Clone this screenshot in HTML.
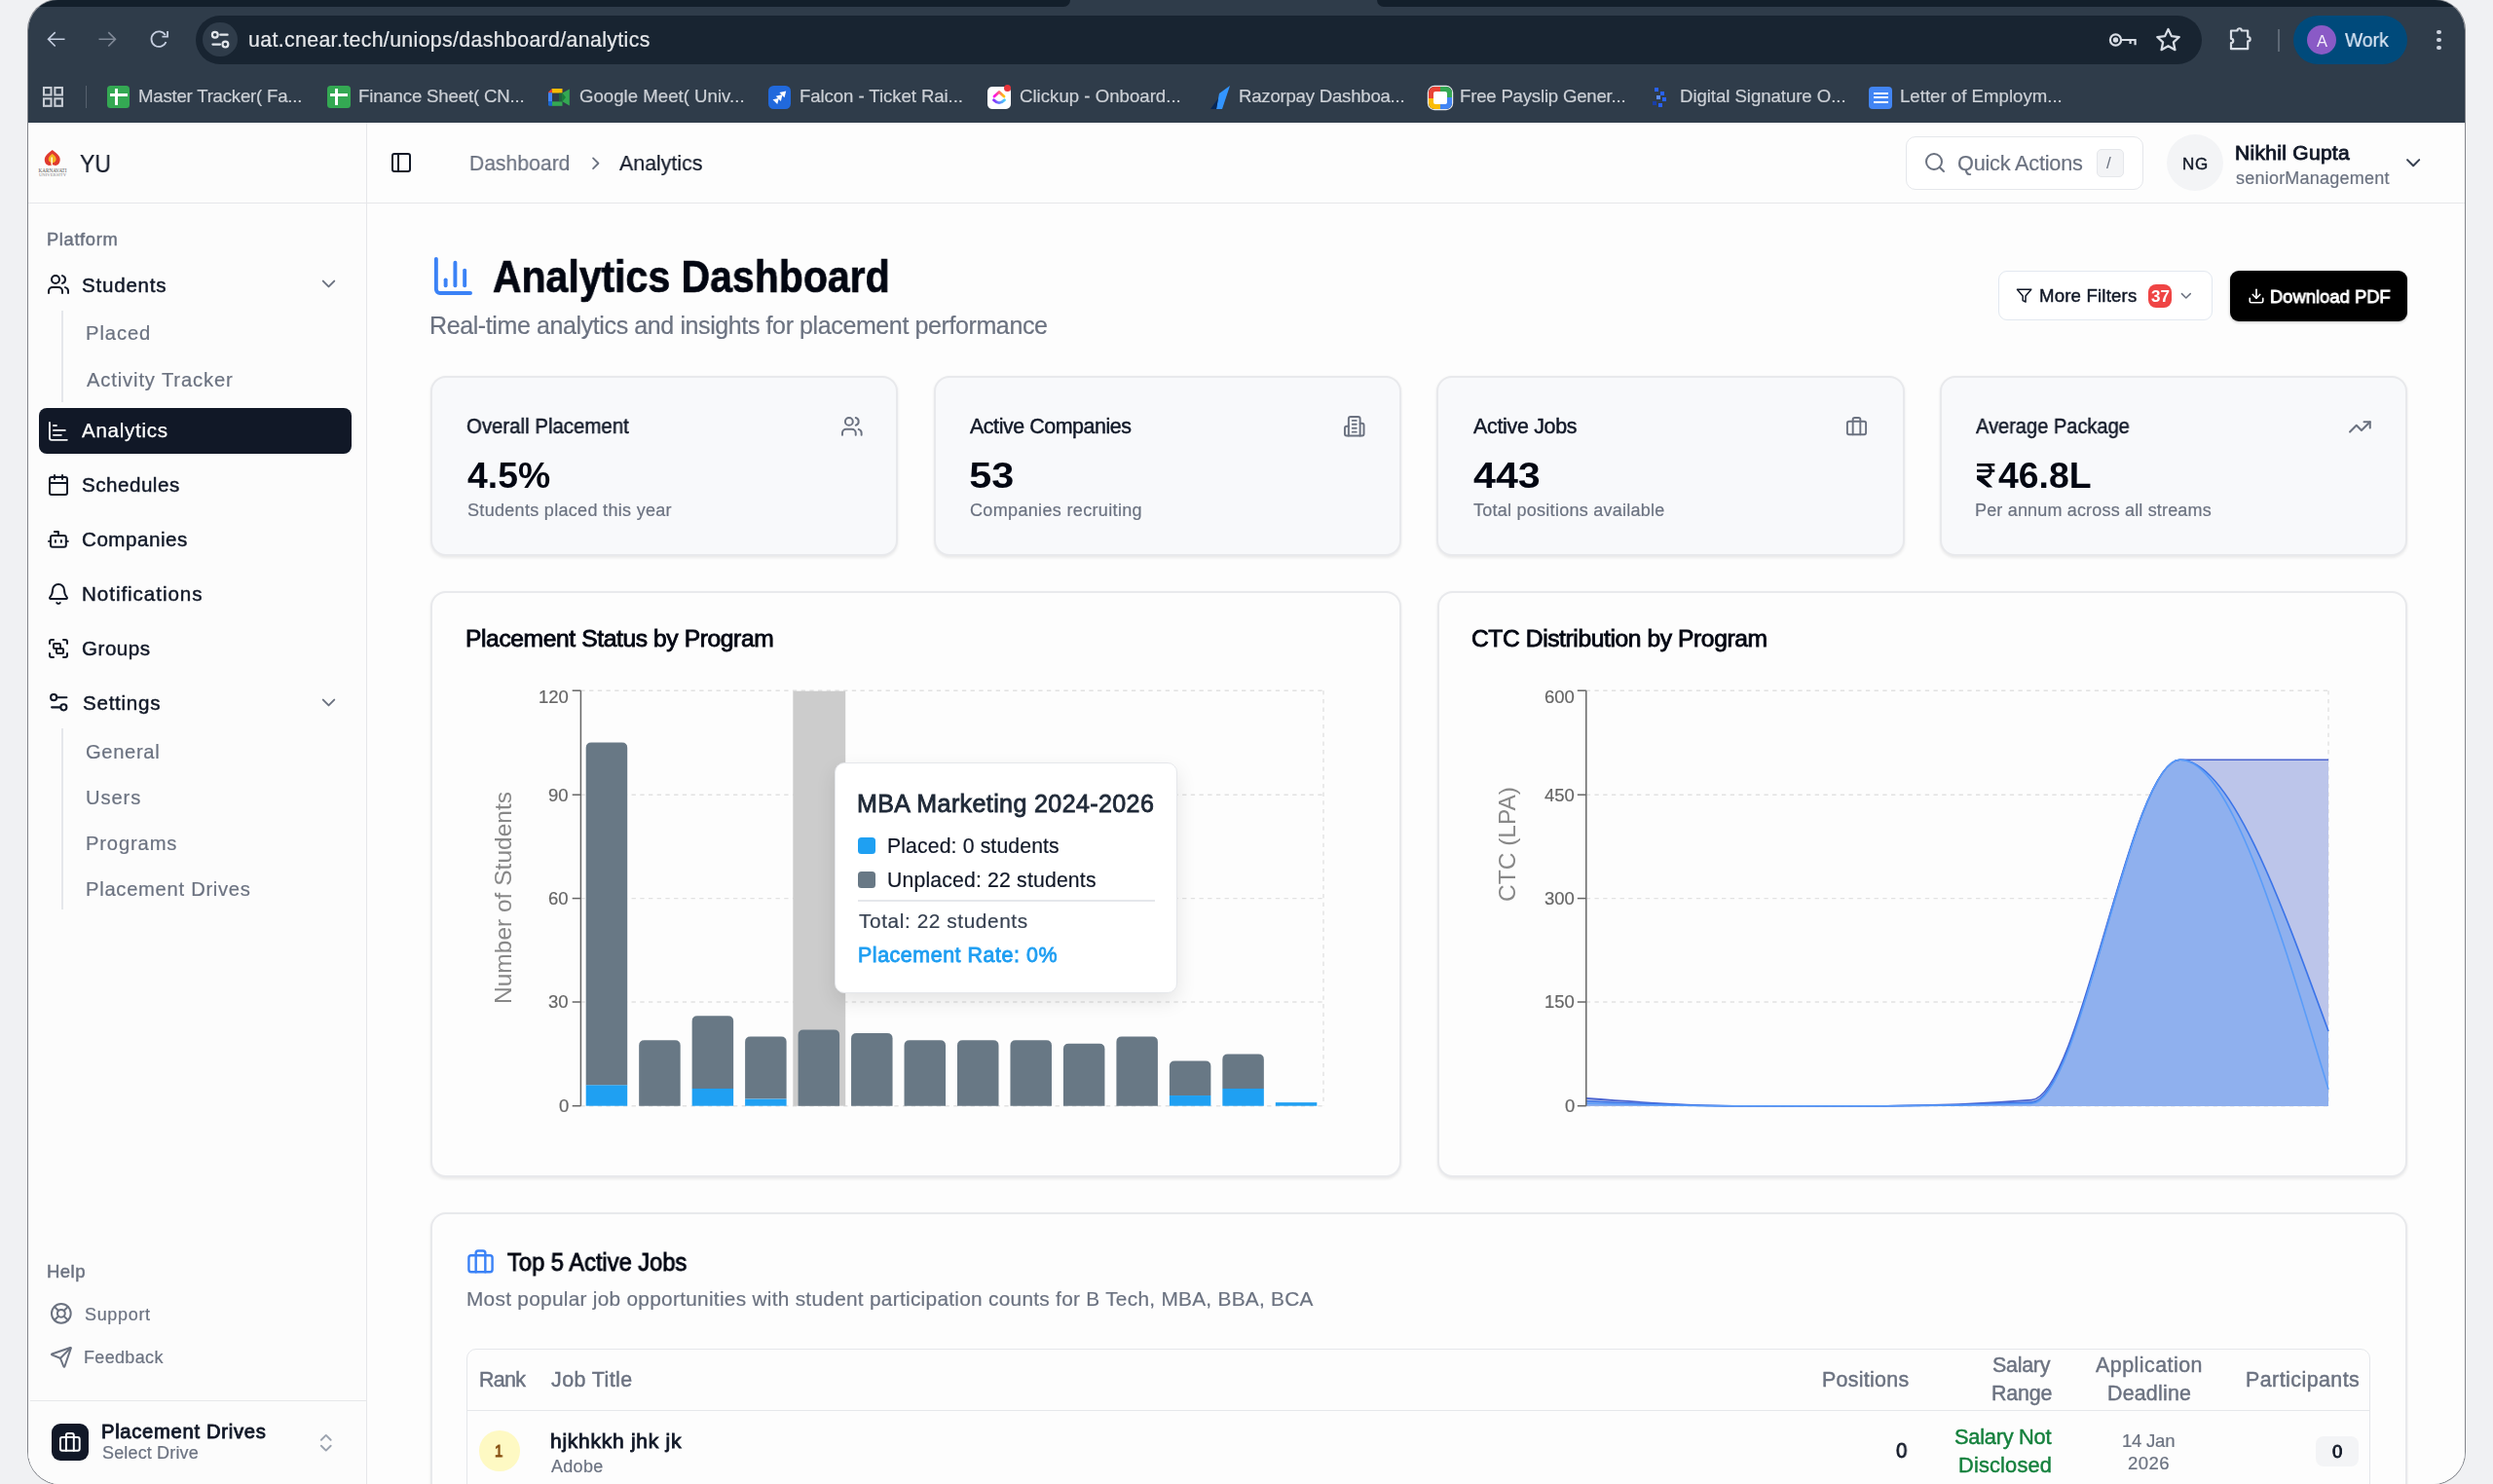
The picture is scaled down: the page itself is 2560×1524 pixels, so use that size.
<!DOCTYPE html>
<html><head><meta charset="utf-8"><title>Analytics Dashboard</title>
<style>
html,body{margin:0;padding:0;width:2560px;height:1524px;overflow:hidden;background:#f0f1f3;font-family:"Liberation Sans",sans-serif}
#win{position:absolute;left:29px;top:0;width:2502px;height:1524px;border-radius:31px 31px 33px 33px;overflow:hidden;background:#fff;box-shadow:0 0 0 1px rgba(40,44,52,.55)}
#stage{position:absolute;left:-29px;top:0;width:2560px;height:1524px}
.t{position:absolute;white-space:nowrap;will-change:transform}
</style></head><body>
<div id="win"><div id="stage">
<div style="position:absolute;left:29px;top:0px;width:2502px;height:126px;background:#2f3c4a"></div>
<div style="position:absolute;left:29px;top:0px;width:1070px;height:6.5px;background:#131f2b;border-bottom-right-radius:12px"></div>
<div style="position:absolute;left:1413.5px;top:0px;width:1117.5px;height:6.5px;background:#131f2b;border-bottom-left-radius:12px"></div>
<div style="position:absolute;left:201px;top:16px;width:2060px;height:49.5px;background:#182431;border-radius:25px"></div>
<div style="position:absolute;left:208.4px;top:23.2px;width:35.2px;height:35.2px;border-radius:50%;background:#2f3c4a"></div>
<svg style="position:absolute;left:210px;top:25px" width="32" height="32" viewBox="210 25 32 32" fill="none" stroke="#e3e7ec" stroke-width="2.2" stroke-linecap="round"><circle cx="220.8" cy="35.7" r="2.9"/><path d="M226.2 35.7H233.6"/><path d="M218.4 45.6H226"/><circle cx="231.4" cy="45.6" r="2.9"/></svg>
<svg style="position:absolute;left:43.5px;top:27.35px" width="27" height="27" viewBox="0 0 24 24" fill="#c5cee0"><path d="M20 11.1H6.6l5.2-5.2-1-1-6.9 6.9 6.9 6.9 1-1-5.2-5.2H20z"/></svg>
<svg style="position:absolute;left:96.5px;top:27.35px;transform:scaleX(-1)" width="27" height="27" viewBox="0 0 24 24" fill="#7f8896"><path d="M20 11.1H6.6l5.2-5.2-1-1-6.9 6.9 6.9 6.9 1-1-5.2-5.2H20z"/></svg>
<svg style="position:absolute;left:149.6px;top:27.4px" width="27" height="27" viewBox="0 0 24 24" fill="none" stroke="#c5cee0" stroke-width="1.6"><path d="M18.2 14.2A6.9 6.9 0 1 1 17.6 8"/><path d="M19.6 4.4V9.4H14.6" stroke-linecap="butt"/></svg>
<svg style="position:absolute;left:2163px;top:28px" width="34" height="26" viewBox="0 0 34 26" fill="none" stroke="#d8dde5" stroke-width="2.2"><circle cx="9.5" cy="13" r="5.6"/><circle cx="9.5" cy="13" r="1.6" fill="#d8dde5"/><path d="M15.1 13H29.6V18.2"/><path d="M24.6 13V17"/></svg>
<svg style="position:absolute;left:2213px;top:27.5px" width="27" height="25" viewBox="0 0 24 22" fill="none" stroke="#d8dde5" stroke-width="2" stroke-linejoin="round"><path d="M12 1.6l3 6.4 7 .8-5.2 4.8 1.4 6.9L12 17l-6.2 3.5 1.4-6.9L2 8.8l7-.8z"/></svg>
<svg style="position:absolute;left:2287px;top:25px" width="30" height="30" viewBox="0 0 30 30" fill="none" stroke="#d8dde5" stroke-width="2.2" stroke-linejoin="round"><path d="M4 6.5H10.5C10.5 3.5 14.8 3.5 14.8 6.5H21.2V13C24.5 13 24.5 17.3 21.2 17.3V25.2H4V19.2C7 19.2 7 14.8 4 14.8Z"/></svg>
<div style="position:absolute;left:2339px;top:29.5px;width:2px;height:23.1px;background:#5d6875"></div>
<div style="position:absolute;left:2355px;top:16px;width:117px;height:49.5px;background:#004a7b;border-radius:25px"></div>
<div style="position:absolute;left:2369px;top:26px;width:30px;height:30px;border-radius:50%;background:#8a5ac6"></div>
<div class="t" style="left:2378.6px;top:32.5px;font-size:16.5px;line-height:18px;color:#f2ecfa">A</div>
<div style="position:absolute;left:2502px;top:30.5px;width:4.8px;height:4.8px;border-radius:50%;background:#ccd3de"></div>
<div style="position:absolute;left:2502px;top:38.5px;width:4.8px;height:4.8px;border-radius:50%;background:#ccd3de"></div>
<div style="position:absolute;left:2502px;top:46.5px;width:4.8px;height:4.8px;border-radius:50%;background:#ccd3de"></div>
<svg style="position:absolute;left:43px;top:88.3px" width="23" height="23" viewBox="0 0 23 23" fill="none" stroke="#c8cdd5" stroke-width="2.1"><rect x="2" y="2" width="7.5" height="7.5"/><rect x="13.4" y="2" width="7.5" height="7.5"/><rect x="2" y="13.3" width="7.5" height="7.5"/><rect x="13.4" y="13.3" width="7.5" height="7.5"/></svg>
<div style="position:absolute;left:87.5px;top:88px;width:1.5px;height:23px;background:#56616e"></div>
<div style="position:absolute;left:110.2px;top:88.2px;width:23.3px;height:22.8px;border-radius:3.5px;background:#34a853"></div><div style="position:absolute;left:113.0px;top:96.2px;width:17.8px;height:2.5px;background:#fff"></div><div style="position:absolute;left:118.10000000000001px;top:91px;width:2.5px;height:17.3px;background:#fff"></div>
<div style="position:absolute;left:336.3px;top:88.2px;width:23.3px;height:22.8px;border-radius:3.5px;background:#34a853"></div><div style="position:absolute;left:339.1px;top:96.2px;width:17.8px;height:2.5px;background:#fff"></div><div style="position:absolute;left:344.2px;top:91px;width:2.5px;height:17.3px;background:#fff"></div>
<svg style="position:absolute;left:563.4px;top:90.8px" width="22" height="18" viewBox="0 0 22 18"><path d="M3.6 0H14.5V4.5H3.6Z" fill="#fbbc04"/><path d="M0 3.8L3.8 0V4.5H0Z" fill="#ea4335"/><path d="M0 4.2H4V13.5H0Z" fill="#4285f4"/><path d="M0 13.3H4V17.8H1.5Q0 17.8 0 16.3Z" fill="#1967d2"/><path d="M4 13.3H14.5V17.8H4Z" fill="#34a853"/><path d="M14.5 4.5V13.3L21.8 17.5V0.6Z" fill="#34a853"/><path d="M14.5 4.5L18 9L14.5 13.3Z" fill="#188038"/><path d="M11 4.5H14.5V13.3H11Z" fill="#188038" opacity=".6"/></svg>
<div style="position:absolute;left:788.7px;top:88.2px;width:23.6px;height:23.6px;border-radius:5.5px;background:#2169dc"></div>
<svg style="position:absolute;left:788.7px;top:88.2px" width="23.6" height="23.6" viewBox="0 0 24 24" fill="#fff"><path d="M18.5 5.5L11.5 7.2L16.8 12.5Z"/><path d="M14.8 9.2L7.8 10.9L13.1 16.2Z"/><path d="M11.1 12.9L4.6 14.6L9.4 19.4Z"/></svg>
<div style="position:absolute;left:1014.4px;top:88.5px;width:24px;height:23px;border-radius:5px;background:#fff"></div>
<svg style="position:absolute;left:1014.4px;top:88.5px" width="24" height="23" viewBox="0 0 24 23" fill="none" stroke-width="2.8" stroke-linecap="round" stroke-linejoin="round"><defs><linearGradient id="cu1" x1="0" x2="1"><stop offset="0" stop-color="#8930fd"/><stop offset="1" stop-color="#49ccf9"/></linearGradient><linearGradient id="cu2" x1="0" x2="1"><stop offset="0" stop-color="#ff02f0"/><stop offset="1" stop-color="#ffc800"/></linearGradient></defs><path d="M6.5 13.8Q12 19.5 17.5 13.8" stroke="url(#cu1)"/><path d="M7 10l5-4.5 5 4.5" stroke="url(#cu2)"/></svg>
<div style="position:absolute;left:1031px;top:86.5px;width:7px;height:7px;border-radius:50%;background:#e8333a"></div>
<svg style="position:absolute;left:1243px;top:88px" width="20" height="24" viewBox="0 0 20 24"><path d="M9 8L20 0L12 24H6Z" fill="#3395ff"/><path d="M0 24L8 13L6 24Z" fill="#072654"/></svg>
<div style="position:absolute;left:1466.9px;top:88.5px;width:24px;height:23px;border-radius:6px;background:conic-gradient(#34a853 0 25%,#4285f4 0 50%,#fbbc04 0 75%,#ea4335 0);box-shadow:0 0 0 1.2px #e8eaed"></div>
<div style="position:absolute;left:1472px;top:93.5px;width:14px;height:13px;border-radius:2px;background:#fff"></div>
<svg style="position:absolute;left:1695px;top:88px" width="20" height="24" viewBox="0 0 20 24" fill="#2962ff"><rect x="4" y="2" width="4" height="4"/><rect x="10" y="6" width="4" height="4"/><rect x="6" y="10" width="4" height="4" fill="#5c8dff"/><rect x="12" y="12" width="4" height="4"/><rect x="2" y="16" width="4" height="4" fill="#1a3fa8"/><rect x="8" y="18" width="4" height="4"/></svg>
<div style="position:absolute;left:1919.4px;top:88.5px;width:24px;height:23px;border-radius:4px;background:#4285f4"></div>
<div style="position:absolute;left:1924px;top:94.5px;width:15px;height:2.200000000000003px;background:#fff"></div>
<div style="position:absolute;left:1924px;top:99px;width:15px;height:2.200000000000003px;background:#fff"></div>
<div style="position:absolute;left:1924px;top:103.5px;width:15px;height:2.200000000000003px;background:#fff"></div>
<div style="position:absolute;left:29px;top:126px;width:2502px;height:1400px;background:#fdfdfd"></div>
<div style="position:absolute;left:29px;top:126px;width:347px;height:1400px;background:#fcfcfc"></div>
<div style="position:absolute;left:376px;top:126px;width:1px;height:1400px;background:#e6e7ea"></div>
<div style="position:absolute;left:29px;top:208px;width:2502px;height:1px;background:#e6e7ea"></div>
<svg style="position:absolute;left:38px;top:152px" width="33" height="31" viewBox="38 152 33 31"><path d="M53.7 154C50.5 156.5 48.5 158 46.8 160.5C45.2 163 45.5 167 48 169C50 170.5 52.5 170.2 53.7 168.8C55 170.2 57.5 170.5 59.5 169C62 167 62.3 163 60.7 160.5C59 158 57 156.5 53.7 154Z" fill="#e03a2f"/><path d="M53.7 157.8C51.8 159.3 50.3 160.8 49.8 162.8C49.3 165 50.8 167 53.7 167.5C56.6 167 58.1 165 57.6 162.8C57.1 160.8 55.6 159.3 53.7 157.8Z" fill="#f4b223"/><path d="M53.2 161.5V169" stroke="#fff6cf" stroke-width="1.6"/><text x="54" y="176.6" text-anchor="middle" font-family="Liberation Serif" font-size="6.2" fill="#555" textLength="29" lengthAdjust="spacingAndGlyphs">KARNAVATI</text><text x="54" y="180.6" text-anchor="middle" font-family="Liberation Serif" font-size="4.2" fill="#888" textLength="28" lengthAdjust="spacingAndGlyphs">UNIVERSITY</text></svg>
<svg style="position:absolute;left:400.30px;top:155.40px;" width="24.00" height="24.00" viewBox="0 0 24 24" fill="none" stroke="#111827" stroke-width="2" stroke-linecap="round" stroke-linejoin="round"><rect width="18" height="18" x="3" y="3" rx="2"/><path d="M9 3v18"/></svg>
<svg style="position:absolute;left:600.60px;top:157.00px;" width="21.50" height="21.50" viewBox="0 0 24 24" fill="none" stroke="#6b7280" stroke-width="2" stroke-linecap="round" stroke-linejoin="round"><path d="m9 18 6-6-6-6"/></svg>
<div style="position:absolute;left:1957px;top:140px;width:243.5px;height:54.599999999999994px;border:1.5px solid #e5e7eb;border-radius:10px;background:#fff;box-sizing:border-box"></div>
<svg style="position:absolute;left:1974.70px;top:155.00px;" width="24.00" height="24.00" viewBox="0 0 24 24" fill="none" stroke="#6b7280" stroke-width="2" stroke-linecap="round" stroke-linejoin="round"><circle cx="11" cy="11" r="8"/><path d="m21 21-4.3-4.3"/></svg>
<div style="position:absolute;left:2153px;top:153px;width:28px;height:28.69999999999999px;border:1.2px solid #e5e7eb;border-radius:5px;background:#f3f4f6;box-sizing:border-box"></div>
<div class="t" style="left:2162.5px;top:158px;font-size:17px;line-height:20px;color:#6b7280">/</div>
<div style="position:absolute;left:2225px;top:138px;width:58px;height:58px;border-radius:50%;background:#f3f4f6"></div>
<svg style="position:absolute;left:2465.75px;top:154.65px;" width="24.30" height="24.30" viewBox="0 0 24 24" fill="none" stroke="#374151" stroke-width="2" stroke-linecap="round" stroke-linejoin="round"><path d="m6 9 6 6 6-6"/></svg>
<div style="position:absolute;left:39.5px;top:418.8px;width:321.5px;height:47.0px;background:#111827;border-radius:8px"></div>
<div style="position:absolute;left:63.2px;top:318.6px;width:1.5px;height:94.0px;background:#e5e7eb"></div>
<div style="position:absolute;left:63.2px;top:747.8px;width:1.5px;height:186.70000000000005px;background:#e5e7eb"></div>
<svg style="position:absolute;left:47.85px;top:280.35px;" width="24.00" height="24.00" viewBox="0 0 24 24" fill="none" stroke="#111827" stroke-width="2" stroke-linecap="round" stroke-linejoin="round"><path d="M16 21v-2a4 4 0 0 0-4-4H6a4 4 0 0 0-4 4v2"/><path d="M16 3.13a4 4 0 0 1 0 7.75"/><path d="M22 21v-2a4 4 0 0 0-3-3.87"/><circle cx="9" cy="7" r="4"/></svg>
<svg style="position:absolute;left:326.30px;top:280.40px;" width="23.00" height="23.00" viewBox="0 0 24 24" fill="none" stroke="#6b7280" stroke-width="2" stroke-linecap="round" stroke-linejoin="round"><path d="m6 9 6 6 6-6"/></svg>
<svg style="position:absolute;left:47.90px;top:431.20px;" width="23.80" height="23.80" viewBox="0 0 24 24" fill="none" stroke="#f3f4f6" stroke-width="1.9" stroke-linecap="round" stroke-linejoin="round"><path d="M3 3v16a2 2 0 0 0 2 2h16"/><path d="M7 16h8"/><path d="M7 11h12"/><path d="M7 6h3"/></svg>
<svg style="position:absolute;left:48.00px;top:485.70px;" width="24.00" height="24.00" viewBox="0 0 24 24" fill="none" stroke="#111827" stroke-width="2" stroke-linecap="round" stroke-linejoin="round"><path d="M8 2v4"/><path d="M16 2v4"/><rect width="18" height="18" x="3" y="4" rx="2"/><path d="M3 10h18"/></svg>
<svg style="position:absolute;left:48.10px;top:542.00px;" width="23.80" height="23.80" viewBox="0 0 24 24" fill="none" stroke="#111827" stroke-width="2" stroke-linecap="round" stroke-linejoin="round"><path d="M12 8V4H8"/><rect width="16" height="12" x="4" y="8" rx="2"/><path d="M2 14h2"/><path d="M20 14h2"/><path d="M15 13v2"/><path d="M9 13v2"/></svg>
<svg style="position:absolute;left:48.00px;top:598.40px;" width="24.00" height="24.00" viewBox="0 0 24 24" fill="none" stroke="#111827" stroke-width="2" stroke-linecap="round" stroke-linejoin="round"><path d="M10.268 21a2 2 0 0 0 3.464 0"/><path d="M3.262 15.326A1 1 0 0 0 4 17h16a1 1 0 0 0 .74-1.673C19.41 13.956 18 12.499 18 8A6 6 0 0 0 6 8c0 4.499-1.411 5.956-2.738 7.326"/></svg>
<svg style="position:absolute;left:48.20px;top:653.70px;" width="24.00" height="24.00" viewBox="0 0 24 24" fill="none" stroke="#111827" stroke-width="2" stroke-linecap="round" stroke-linejoin="round"><path d="M3 7V5c0-1.1.9-2 2-2h2"/><path d="M17 3h2c1.1 0 2 .9 2 2v2"/><path d="M21 17v2c0 1.1-.9 2-2 2h-2"/><path d="M7 21H5c-1.1 0-2-.9-2-2v-2"/><rect width="7" height="5" x="7" y="7" rx="1"/><rect width="7" height="5" x="10" y="12" rx="1"/></svg>
<svg style="position:absolute;left:48.00px;top:709.40px;" width="24.50" height="24.50" viewBox="0 0 24 24" fill="none" stroke="#111827" stroke-width="2" stroke-linecap="round" stroke-linejoin="round"><path d="M20 7h-9"/><path d="M14 17H5"/><circle cx="17" cy="17" r="3"/><circle cx="7" cy="7" r="3"/></svg>
<svg style="position:absolute;left:326.40px;top:710.00px;" width="23.00" height="23.00" viewBox="0 0 24 24" fill="none" stroke="#6b7280" stroke-width="2" stroke-linecap="round" stroke-linejoin="round"><path d="m6 9 6 6 6-6"/></svg>
<svg style="position:absolute;left:51.30px;top:1337.30px;" width="23.70" height="23.70" viewBox="0 0 24 24" fill="none" stroke="#6b7280" stroke-width="2" stroke-linecap="round" stroke-linejoin="round"><circle cx="12" cy="12" r="10"/><path d="m4.93 4.93 4.24 4.24"/><path d="m14.83 9.17 4.24-4.24"/><path d="m14.83 14.83 4.24 4.24"/><path d="m9.17 14.83-4.24 4.24"/><circle cx="12" cy="12" r="4"/></svg>
<svg style="position:absolute;left:51.10px;top:1381.50px;" width="23.80" height="23.80" viewBox="0 0 24 24" fill="none" stroke="#6b7280" stroke-width="2" stroke-linecap="round" stroke-linejoin="round"><path d="M14.536 21.686a.5.5 0 0 0 .937-.024l6.5-19a.496.496 0 0 0-.635-.635l-19 6.5a.5.5 0 0 0-.024.937l7.93 3.18a2 2 0 0 1 1.112 1.11z"/><path d="m21.854 2.147-10.94 10.939"/></svg>
<div style="position:absolute;left:31px;top:1437.5px;width:345px;height:1.0px;background:#e6e7ea"></div>
<div style="position:absolute;left:52.7px;top:1462px;width:38.099999999999994px;height:38px;background:#111827;border-radius:9px"></div>
<svg style="position:absolute;left:59.90px;top:1469.65px;" width="23.70" height="23.70" viewBox="0 0 24 24" fill="none" stroke="#ffffff" stroke-width="2" stroke-linecap="round" stroke-linejoin="round"><path d="M16 20V4a2 2 0 0 0-2-2h-4a2 2 0 0 0-2 2v16"/><rect width="20" height="14" x="2" y="6" rx="2"/></svg>
<svg style="position:absolute;left:323.00px;top:1469.70px;" width="23.50" height="23.50" viewBox="0 0 24 24" fill="none" stroke="#9ca3af" stroke-width="2" stroke-linecap="round" stroke-linejoin="round"><path d="m7 15 5 5 5-5"/><path d="m7 9 5-5 5 5"/></svg>
<svg style="position:absolute;left:442.00px;top:259.90px;" width="46.90" height="46.90" viewBox="0 0 24 24" fill="none" stroke="#3b82f6" stroke-width="2" stroke-linecap="round" stroke-linejoin="round"><path d="M3 3v16a2 2 0 0 0 2 2h16"/><path d="M18 17V9"/><path d="M13 17V5"/><path d="M8 17v-3"/></svg>
<div style="position:absolute;left:2052px;top:278px;width:219.69999999999982px;height:51px;border:1.5px solid #e2e8f0;border-radius:9px;background:#fff;box-sizing:border-box"></div>
<svg style="position:absolute;left:2070.20px;top:295.05px;" width="17.20" height="17.20" viewBox="0 0 24 24" fill="none" stroke="#111827" stroke-width="2.1" stroke-linecap="round" stroke-linejoin="round"><polygon points="22 3 2 3 10 12.46 10 19 14 21 14 12.46 22 3"/></svg>
<div style="position:absolute;left:2206.3px;top:292px;width:23.59999999999991px;height:23.600000000000023px;background:#ef4444;border-radius:8px"></div>
<svg style="position:absolute;left:2235.60px;top:294.85px;" width="17.70" height="17.70" viewBox="0 0 24 24" fill="none" stroke="#6b7280" stroke-width="2" stroke-linecap="round" stroke-linejoin="round"><path d="m6 9 6 6 6-6"/></svg>
<div style="position:absolute;left:2290px;top:278px;width:182px;height:52px;background:#000;border-radius:9px;box-shadow:0 1px 3px rgba(0,0,0,.25)"></div>
<svg style="position:absolute;left:2307.50px;top:295.05px;" width="18.00" height="18.00" viewBox="0 0 24 24" fill="none" stroke="#ffffff" stroke-width="2.2" stroke-linecap="round" stroke-linejoin="round"><path d="M21 15v4a2 2 0 0 1-2 2H5a2 2 0 0 1-2-2v-4"/><polyline points="7 10 12 15 17 10"/><line x1="12" x2="12" y1="15" y2="3"/></svg>
<div style="position:absolute;left:441.8px;top:386px;width:480.59999999999997px;height:184.5px;background:#f8f9fb;border:2px solid #e8e9ec;border-radius:16px;box-sizing:border-box;box-shadow:0 1.5px 3px rgba(0,0,0,.08)"></div>
<div style="position:absolute;left:958.6px;top:386px;width:480.6px;height:184.5px;background:#f8f9fb;border:2px solid #e8e9ec;border-radius:16px;box-sizing:border-box;box-shadow:0 1.5px 3px rgba(0,0,0,.08)"></div>
<div style="position:absolute;left:1475.4px;top:386px;width:480.39999999999986px;height:184.5px;background:#f8f9fb;border:2px solid #e8e9ec;border-radius:16px;box-sizing:border-box;box-shadow:0 1.5px 3px rgba(0,0,0,.08)"></div>
<div style="position:absolute;left:1991.8px;top:386px;width:480.60000000000014px;height:184.5px;background:#f8f9fb;border:2px solid #e8e9ec;border-radius:16px;box-sizing:border-box;box-shadow:0 1.5px 3px rgba(0,0,0,.08)"></div>
<svg style="position:absolute;left:2029.8px;top:476px" width="19" height="25" viewBox="0 0 19 25" fill="#030712"><rect x="0" y="0" width="18.3" height="2.5"/><rect x="0" y="6.2" width="18.3" height="2.6"/><path d="M0 1.25H8.6C13 1.25 14.3 4.2 14.3 7.6C14.3 11.4 11.8 13.9 7.8 13.9H0" fill="none" stroke="#030712" stroke-width="2.7"/><path d="M0 12.6H4.6L16.2 24.4H10.9L0 16.4Z"/></svg>
<svg style="position:absolute;left:862.60px;top:425.90px;" width="23.60" height="23.60" viewBox="0 0 24 24" fill="none" stroke="#6b7280" stroke-width="2" stroke-linecap="round" stroke-linejoin="round"><path d="M16 21v-2a4 4 0 0 0-4-4H6a4 4 0 0 0-4 4v2"/><path d="M16 3.13a4 4 0 0 1 0 7.75"/><path d="M22 21v-2a4 4 0 0 0-3-3.87"/><circle cx="9" cy="7" r="4"/></svg>
<svg style="position:absolute;left:1379.40px;top:426.00px;" width="23.50" height="23.50" viewBox="0 0 24 24" fill="none" stroke="#6b7280" stroke-width="2" stroke-linecap="round" stroke-linejoin="round"><path d="M6 22V4a2 2 0 0 1 2-2h8a2 2 0 0 1 2 2v18Z"/><path d="M6 12H4a2 2 0 0 0-2 2v6a2 2 0 0 0 2 2h2"/><path d="M18 9h2a2 2 0 0 1 2 2v9a2 2 0 0 1-2 2h-2"/><path d="M10 6h4"/><path d="M10 10h4"/><path d="M10 14h4"/><path d="M10 18h4"/></svg>
<svg style="position:absolute;left:1895.35px;top:427.40px;" width="23.00" height="23.00" viewBox="0 0 24 24" fill="none" stroke="#6b7280" stroke-width="2" stroke-linecap="round" stroke-linejoin="round"><path d="M16 20V4a2 2 0 0 0-2-2h-4a2 2 0 0 0-2 2v16"/><rect width="20" height="14" x="2" y="6" rx="2"/></svg>
<svg style="position:absolute;left:2411.45px;top:425.80px;" width="24.80" height="24.80" viewBox="0 0 24 24" fill="none" stroke="#6b7280" stroke-width="2" stroke-linecap="round" stroke-linejoin="round"><polyline points="22 7 13.5 15.5 8.5 10.5 2 17"/><polyline points="16 7 22 7 22 13"/></svg>
<div style="position:absolute;left:441.6px;top:606.8px;width:997.1999999999999px;height:602.7px;background:#fdfdfd;border:2px solid #e8e9ec;border-radius:16px;box-sizing:border-box;box-shadow:0 1.5px 3px rgba(0,0,0,.08)"></div>
<div style="position:absolute;left:1475.6px;top:606.8px;width:996.8000000000002px;height:602.7px;background:#fdfdfd;border:2px solid #e8e9ec;border-radius:16px;box-sizing:border-box;box-shadow:0 1.5px 3px rgba(0,0,0,.08)"></div>
<svg style="position:absolute;left:0;top:0" width="2560" height="1524" viewBox="0 0 2560 1524"><line x1="596.4" y1="709.2" x2="1359" y2="709.2" stroke="#e2e2e2" stroke-width="1.4" stroke-dasharray="4.3 4.4"/><line x1="596.4" y1="816.2" x2="1359" y2="816.2" stroke="#e2e2e2" stroke-width="1.4" stroke-dasharray="4.3 4.4"/><line x1="596.4" y1="922.6" x2="1359" y2="922.6" stroke="#e2e2e2" stroke-width="1.4" stroke-dasharray="4.3 4.4"/><line x1="596.4" y1="1029" x2="1359" y2="1029" stroke="#e2e2e2" stroke-width="1.4" stroke-dasharray="4.3 4.4"/><line x1="596.4" y1="1135.7" x2="1359" y2="1135.7" stroke="#e2e2e2" stroke-width="1.4" stroke-dasharray="4.3 4.4"/><line x1="1359" y1="709.2" x2="1359" y2="1135.7" stroke="#e2e2e2" stroke-width="1.4" stroke-dasharray="4.3 4.4"/><rect x="814.3" y="709.7" width="53.9" height="426" fill="#cccccc"/><path d="M601.70 1114.38V768.03Q601.70 762.53 607.20 762.53H638.70Q644.20 762.53 644.20 768.03V1114.38Z" fill="#687885"/><rect x="601.70" y="1114.38" width="42.5" height="21.32" fill="#1fa0f2"/><path d="M656.17 1135.70V1073.67Q656.17 1068.17 661.67 1068.17H693.17Q698.67 1068.17 698.67 1073.67V1135.70Z" fill="#687885"/><path d="M710.64 1117.93V1048.80Q710.64 1043.30 716.14 1043.30H747.64Q753.14 1043.30 753.14 1048.80V1117.93Z" fill="#687885"/><rect x="710.64" y="1117.93" width="42.5" height="17.77" fill="#1fa0f2"/><path d="M765.11 1128.59V1070.12Q765.11 1064.62 770.61 1064.62H802.11Q807.61 1064.62 807.61 1070.12V1128.59Z" fill="#687885"/><rect x="765.11" y="1128.59" width="42.5" height="7.11" fill="#1fa0f2"/><path d="M819.58 1135.70V1063.01Q819.58 1057.51 825.08 1057.51H856.58Q862.08 1057.51 862.08 1063.01V1135.70Z" fill="#687885"/><path d="M874.05 1135.70V1066.57Q874.05 1061.07 879.55 1061.07H911.05Q916.55 1061.07 916.55 1066.57V1135.70Z" fill="#687885"/><path d="M928.52 1135.70V1073.67Q928.52 1068.17 934.02 1068.17H965.52Q971.02 1068.17 971.02 1073.67V1135.70Z" fill="#687885"/><path d="M982.99 1135.70V1073.67Q982.99 1068.17 988.49 1068.17H1019.99Q1025.49 1068.17 1025.49 1073.67V1135.70Z" fill="#687885"/><path d="M1037.46 1135.70V1073.67Q1037.46 1068.17 1042.96 1068.17H1074.46Q1079.96 1068.17 1079.96 1073.67V1135.70Z" fill="#687885"/><path d="M1091.93 1135.70V1077.23Q1091.93 1071.73 1097.43 1071.73H1128.93Q1134.43 1071.73 1134.43 1077.23V1135.70Z" fill="#687885"/><path d="M1146.40 1135.70V1070.12Q1146.40 1064.62 1151.90 1064.62H1183.40Q1188.90 1064.62 1188.90 1070.12V1135.70Z" fill="#687885"/><path d="M1200.87 1125.04V1095.00Q1200.87 1089.50 1206.37 1089.50H1237.87Q1243.37 1089.50 1243.37 1095.00V1125.04Z" fill="#687885"/><rect x="1200.87" y="1125.04" width="42.5" height="10.66" fill="#1fa0f2"/><path d="M1255.34 1117.93V1087.89Q1255.34 1082.39 1260.84 1082.39H1292.34Q1297.84 1082.39 1297.84 1087.89V1117.93Z" fill="#687885"/><rect x="1255.34" y="1117.93" width="42.5" height="17.77" fill="#1fa0f2"/><rect x="1309.81" y="1132.15" width="42.5" height="3.55" fill="#1fa0f2"/><line x1="596.4" y1="709.2" x2="596.4" y2="1135.7" stroke="#666" stroke-width="1.5"/><line x1="587.7" y1="709.2" x2="596.4" y2="709.2" stroke="#666" stroke-width="1.5"/><line x1="587.7" y1="816.2" x2="596.4" y2="816.2" stroke="#666" stroke-width="1.5"/><line x1="587.7" y1="922.6" x2="596.4" y2="922.6" stroke="#666" stroke-width="1.5"/><line x1="587.7" y1="1029" x2="596.4" y2="1029" stroke="#666" stroke-width="1.5"/><line x1="587.7" y1="1135.7" x2="596.4" y2="1135.7" stroke="#666" stroke-width="1.5"/><line x1="1628.8" y1="709.2" x2="2391" y2="709.2" stroke="#e2e2e2" stroke-width="1.4" stroke-dasharray="4.3 4.4"/><line x1="1628.8" y1="816.2" x2="2391" y2="816.2" stroke="#e2e2e2" stroke-width="1.4" stroke-dasharray="4.3 4.4"/><line x1="1628.8" y1="922.6" x2="2391" y2="922.6" stroke="#e2e2e2" stroke-width="1.4" stroke-dasharray="4.3 4.4"/><line x1="1628.8" y1="1029" x2="2391" y2="1029" stroke="#e2e2e2" stroke-width="1.4" stroke-dasharray="4.3 4.4"/><line x1="1628.8" y1="1135.7" x2="2391" y2="1135.7" stroke="#e2e2e2" stroke-width="1.4" stroke-dasharray="4.3 4.4"/><line x1="2391" y1="709.2" x2="2391" y2="1135.7" stroke="#e2e2e2" stroke-width="1.4" stroke-dasharray="4.3 4.4"/><path d="M1628.80,1127.88C1679.61,1131.79 1730.43,1135.70 1781.24,1135.70C1832.05,1135.70 1882.87,1135.70 1933.68,1135.70C1984.49,1135.70 2035.31,1133.69 2086.12,1129.66C2136.93,1125.63 2187.75,780.28 2238.56,780.28C2289.37,780.28 2340.19,780.28 2391.00,780.28L2391.00,1135.7L1628.80,1135.7Z" fill="#bcc5ea" stroke="none"/><path d="M1628.80,1130.72C1679.61,1133.21 1730.43,1135.70 1781.24,1135.70C1832.05,1135.70 1882.87,1135.70 1933.68,1135.70C1984.49,1135.70 2035.31,1134.52 2086.12,1132.15C2136.93,1129.78 2187.75,780.28 2238.56,780.28C2289.37,780.28 2340.19,919.61 2391.00,1058.93L2391.00,1135.7L1628.80,1135.7Z" fill="#8fb0ee" stroke="none"/><path d="M1628.80,1133.21C1679.61,1134.46 1730.43,1135.70 1781.24,1135.70C1832.05,1135.70 1882.87,1135.70 1933.68,1135.70C1984.49,1135.70 2035.31,1134.99 2086.12,1133.57C2136.93,1132.15 2187.75,780.28 2238.56,780.28C2289.37,780.28 2340.19,949.46 2391.00,1118.64L2391.00,1135.7L1628.80,1135.7Z" fill="#8fb0ee" stroke="none"/><path d="M1628.80,1127.88C1679.61,1131.79 1730.43,1135.70 1781.24,1135.70C1832.05,1135.70 1882.87,1135.70 1933.68,1135.70C1984.49,1135.70 2035.31,1133.69 2086.12,1129.66C2136.93,1125.63 2187.75,780.28 2238.56,780.28C2289.37,780.28 2340.19,780.28 2391.00,780.28" fill="none" stroke="#4a63d0" stroke-width="1.6"/><path d="M1628.80,1130.72C1679.61,1133.21 1730.43,1135.70 1781.24,1135.70C1832.05,1135.70 1882.87,1135.70 1933.68,1135.70C1984.49,1135.70 2035.31,1134.52 2086.12,1132.15C2136.93,1129.78 2187.75,780.28 2238.56,780.28C2289.37,780.28 2340.19,919.61 2391.00,1058.93" fill="none" stroke="#3b74e8" stroke-width="1.6"/><path d="M1628.80,1133.21C1679.61,1134.46 1730.43,1135.70 1781.24,1135.70C1832.05,1135.70 1882.87,1135.70 1933.68,1135.70C1984.49,1135.70 2035.31,1134.99 2086.12,1133.57C2136.93,1132.15 2187.75,780.28 2238.56,780.28C2289.37,780.28 2340.19,949.46 2391.00,1118.64" fill="none" stroke="#5a9cf8" stroke-width="1.6"/><line x1="1628.8" y1="709.2" x2="1628.8" y2="1135.7" stroke="#666" stroke-width="1.5"/><line x1="1619.8" y1="709.2" x2="1628.8" y2="709.2" stroke="#666" stroke-width="1.5"/><line x1="1619.8" y1="816.2" x2="1628.8" y2="816.2" stroke="#666" stroke-width="1.5"/><line x1="1619.8" y1="922.6" x2="1628.8" y2="922.6" stroke="#666" stroke-width="1.5"/><line x1="1619.8" y1="1029" x2="1628.8" y2="1029" stroke="#666" stroke-width="1.5"/><line x1="1619.8" y1="1135.7" x2="1628.8" y2="1135.7" stroke="#666" stroke-width="1.5"/><text transform="translate(524.5 922) rotate(-90)" text-anchor="middle" font-family="Liberation Sans" font-size="24.5" fill="#888">Number of Students</text><text transform="translate(1556 867) rotate(-90)" text-anchor="middle" font-family="Liberation Sans" font-size="24.5" fill="#888">CTC (LPA)</text></svg>
<div style="position:absolute;left:856.5px;top:782.7px;width:352.70000000000005px;height:237.19999999999993px;background:#fff;border:1px solid #e5e7eb;border-radius:10px;box-sizing:border-box;box-shadow:0 8px 20px rgba(0,0,0,.10)"></div>
<div style="position:absolute;left:881px;top:859.7px;width:17.600000000000023px;height:17.5px;background:#1fa0f2;border-radius:3.5px"></div>
<div style="position:absolute;left:881px;top:895.3px;width:17.600000000000023px;height:17.200000000000045px;background:#687885;border-radius:3.5px"></div>
<div style="position:absolute;left:881px;top:924.2px;width:304.5999999999999px;height:1.3999999999999773px;background:#e5e7eb"></div>
<div style="position:absolute;left:441.6px;top:1244.6px;width:2030.9px;height:355.4000000000001px;background:#fdfdfd;border:2px solid #e8e9ec;border-radius:16px;box-sizing:border-box;box-shadow:0 1.5px 3px rgba(0,0,0,.08)"></div>
<svg style="position:absolute;left:479.10px;top:1281.70px;" width="29.00" height="29.00" viewBox="0 0 24 24" fill="none" stroke="#3b82f6" stroke-width="2" stroke-linecap="round" stroke-linejoin="round"><path d="M16 20V4a2 2 0 0 0-2-2h-4a2 2 0 0 0-2 2v16"/><rect width="20" height="14" x="2" y="6" rx="2"/></svg>
<div style="position:absolute;left:479.2px;top:1385px;width:1954.9999999999998px;height:215px;border:1.5px solid #e5e7eb;border-radius:10px;box-sizing:border-box"></div>
<div style="position:absolute;left:479.2px;top:1447.7px;width:1954.9999999999998px;height:1.5px;background:#e5e7eb"></div>
<div style="position:absolute;left:492px;top:1469.3px;width:41.5px;height:41.5px;border-radius:50%;background:#fef9c3"></div>
<div style="position:absolute;left:2378.3px;top:1474.5px;width:43.59999999999991px;height:31.09999999999991px;background:#f3f4f6;border-radius:8px"></div>
<div class="t" style="left:255.30px;top:30.87px;font-size:21.3px;line-height:21.3px;color:#e6e8eb;-webkit-text-stroke:0.2px #e6e8eb;letter-spacing:0.363px">uat.cnear.tech/uniops/dashboard/analytics</div>
<div class="t" style="left:142.10px;top:90.36px;font-size:18.6px;line-height:18.6px;color:#ccd0d6;-webkit-text-stroke:0.2px #ccd0d6;letter-spacing:-0.210px">Master Tracker( Fa...</div>
<div class="t" style="left:368.00px;top:90.36px;font-size:18.6px;line-height:18.6px;color:#ccd0d6;-webkit-text-stroke:0.2px #ccd0d6;letter-spacing:-0.155px">Finance Sheet( CN...</div>
<div class="t" style="left:594.90px;top:90.36px;font-size:18.6px;line-height:18.6px;color:#ccd0d6;-webkit-text-stroke:0.2px #ccd0d6;letter-spacing:0.023px">Google Meet( Univ...</div>
<div class="t" style="left:820.50px;top:90.36px;font-size:18.6px;line-height:18.6px;color:#ccd0d6;-webkit-text-stroke:0.2px #ccd0d6;letter-spacing:-0.073px">Falcon - Ticket Rai...</div>
<div class="t" style="left:1047.20px;top:90.36px;font-size:18.6px;line-height:18.6px;color:#ccd0d6;-webkit-text-stroke:0.2px #ccd0d6;letter-spacing:0.022px">Clickup - Onboard...</div>
<div class="t" style="left:1272.40px;top:90.36px;font-size:18.6px;line-height:18.6px;color:#ccd0d6;-webkit-text-stroke:0.2px #ccd0d6;letter-spacing:-0.222px">Razorpay Dashboa...</div>
<div class="t" style="left:1498.60px;top:90.36px;font-size:18.6px;line-height:18.6px;color:#ccd0d6;-webkit-text-stroke:0.2px #ccd0d6;letter-spacing:-0.199px">Free Payslip Gener...</div>
<div class="t" style="left:1724.90px;top:90.36px;font-size:18.6px;line-height:18.6px;color:#ccd0d6;-webkit-text-stroke:0.2px #ccd0d6;letter-spacing:-0.047px">Digital Signature O...</div>
<div class="t" style="left:1951.10px;top:90.36px;font-size:18.6px;line-height:18.6px;color:#ccd0d6;-webkit-text-stroke:0.2px #ccd0d6;letter-spacing:0.021px">Letter of Employm...</div>
<div class="t" style="left:2408.00px;top:31.46px;font-size:20.6px;line-height:20.6px;color:#dbe7f5;-webkit-text-stroke:0.2px #dbe7f5;transform:scaleX(0.9364);transform-origin:0.00px 0">Work</div>
<div class="t" style="left:81.50px;top:155.54px;font-size:25px;line-height:25px;color:#111827;-webkit-text-stroke:0.2px #111827;transform:scaleX(0.9176);transform-origin:0.00px 0">YU</div>
<div class="t" style="left:481.50px;top:156.54px;font-size:22.4px;line-height:22.4px;color:#6b7280;-webkit-text-stroke:0.2px #6b7280;transform:scaleX(0.9446);transform-origin:-1.00px 0">Dashboard</div>
<div class="t" style="left:635.90px;top:156.54px;font-size:22.4px;line-height:22.4px;color:#111827;-webkit-text-stroke:0.2px #111827;transform:scaleX(0.9530);transform-origin:0.00px 0">Analytics</div>
<div class="t" style="left:2009.80px;top:156.93px;font-size:21.7px;line-height:21.7px;color:#6b7280;-webkit-text-stroke:0.2px #6b7280;letter-spacing:-0.212px">Quick Actions</div>
<div class="t" style="left:2241.00px;top:159.71px;font-size:17px;line-height:17px;color:#111827;-webkit-text-stroke:0.45px #111827;letter-spacing:0.723px">NG</div>
<div class="t" style="left:2295.00px;top:146.32px;font-size:21px;line-height:21px;color:#111827;-webkit-text-stroke:0.85px #111827;letter-spacing:0.300px">Nikhil Gupta</div>
<div class="t" style="left:2296.00px;top:173.76px;font-size:18px;line-height:18px;color:#6b7280;-webkit-text-stroke:0.2px #6b7280;letter-spacing:0.221px">seniorManagement</div>
<div class="t" style="left:47.90px;top:236.91px;font-size:18.3px;line-height:18.3px;color:#6b7280;-webkit-text-stroke:0.45px #6b7280;letter-spacing:0.652px">Platform</div>
<div class="t" style="left:84.40px;top:282.56px;font-size:20.6px;line-height:20.6px;color:#111827;-webkit-text-stroke:0.45px #111827;letter-spacing:0.758px">Students</div>
<div class="t" style="left:87.60px;top:332.40px;font-size:20.2px;line-height:20.2px;color:#6b7280;-webkit-text-stroke:0.2px #6b7280;letter-spacing:0.920px">Placed</div>
<div class="t" style="left:88.60px;top:379.80px;font-size:20.2px;line-height:20.2px;color:#6b7280;-webkit-text-stroke:0.2px #6b7280;letter-spacing:0.861px">Activity Tracker</div>
<div class="t" style="left:84.40px;top:432.36px;font-size:20.6px;line-height:20.6px;color:#ffffff;-webkit-text-stroke:0.45px #ffffff;letter-spacing:0.699px;-webkit-text-stroke:0.25px #ffffff">Analytics</div>
<div class="t" style="left:84.40px;top:488.16px;font-size:20.6px;line-height:20.6px;color:#111827;-webkit-text-stroke:0.45px #111827;letter-spacing:0.503px">Schedules</div>
<div class="t" style="left:83.60px;top:544.16px;font-size:20.6px;line-height:20.6px;color:#111827;-webkit-text-stroke:0.45px #111827;letter-spacing:0.516px">Companies</div>
<div class="t" style="left:83.60px;top:599.96px;font-size:20.6px;line-height:20.6px;color:#111827;-webkit-text-stroke:0.45px #111827;letter-spacing:0.944px">Notifications</div>
<div class="t" style="left:83.60px;top:655.96px;font-size:20.6px;line-height:20.6px;color:#111827;-webkit-text-stroke:0.45px #111827;letter-spacing:0.513px">Groups</div>
<div class="t" style="left:84.60px;top:711.96px;font-size:20.6px;line-height:20.6px;color:#111827;-webkit-text-stroke:0.45px #111827;letter-spacing:0.727px">Settings</div>
<div class="t" style="left:87.80px;top:761.50px;font-size:20.2px;line-height:20.2px;color:#6b7280;-webkit-text-stroke:0.2px #6b7280;letter-spacing:0.644px">General</div>
<div class="t" style="left:87.80px;top:809.10px;font-size:20.2px;line-height:20.2px;color:#6b7280;-webkit-text-stroke:0.2px #6b7280;letter-spacing:0.894px">Users</div>
<div class="t" style="left:87.80px;top:855.80px;font-size:20.2px;line-height:20.2px;color:#6b7280;-webkit-text-stroke:0.2px #6b7280;letter-spacing:0.842px">Programs</div>
<div class="t" style="left:87.80px;top:903.00px;font-size:20.2px;line-height:20.2px;color:#6b7280;-webkit-text-stroke:0.2px #6b7280;letter-spacing:0.714px">Placement Drives</div>
<div class="t" style="left:48.00px;top:1296.54px;font-size:18.5px;line-height:18.5px;color:#6b7280;-webkit-text-stroke:0.45px #6b7280;letter-spacing:0.480px">Help</div>
<div class="t" style="left:87.20px;top:1341.06px;font-size:18px;line-height:18px;color:#6b7280;-webkit-text-stroke:0.2px #6b7280;letter-spacing:0.676px">Support</div>
<div class="t" style="left:86.20px;top:1385.06px;font-size:18px;line-height:18px;color:#6b7280;-webkit-text-stroke:0.2px #6b7280;letter-spacing:0.336px">Feedback</div>
<div class="t" style="left:104.30px;top:1460.00px;font-size:20.2px;line-height:20.2px;color:#111827;-webkit-text-stroke:0.85px #111827;letter-spacing:0.707px">Placement Drives</div>
<div class="t" style="left:105.30px;top:1483.36px;font-size:18px;line-height:18px;color:#6b7280;-webkit-text-stroke:0.2px #6b7280;letter-spacing:0.153px">Select Drive</div>
<div class="t" style="left:506.00px;top:261.16px;font-size:46px;line-height:46px;color:#030712;font-weight:700;transform:scaleX(0.8911);transform-origin:-1.00px 0;-webkit-text-stroke:0.7px #030712">Analytics Dashboard</div>
<div class="t" style="left:441.20px;top:321.74px;font-size:25px;line-height:25px;color:#6b7280;-webkit-text-stroke:0.2px #6b7280;letter-spacing:-0.392px">Real-time analytics and insights for placement performance</div>
<div class="t" style="left:2093.70px;top:295.36px;font-size:18.6px;line-height:18.6px;color:#111827;-webkit-text-stroke:0.45px #111827;letter-spacing:0.187px">More Filters</div>
<div class="t" style="left:2209.00px;top:295.71px;font-size:17px;line-height:17px;color:#ffffff;font-weight:700;letter-spacing:0.045px">37</div>
<div class="t" style="left:2330.70px;top:295.25px;font-size:19.2px;line-height:19.2px;color:#ffffff;-webkit-text-stroke:0.85px #ffffff;transform:scaleX(0.9590);transform-origin:-1.00px 0">Download PDF</div>
<div class="t" style="left:478.70px;top:427.68px;font-size:21.4px;line-height:21.4px;color:#111827;-webkit-text-stroke:0.45px #111827;transform:scaleX(0.9545);transform-origin:-1.00px 0">Overall Placement</div>
<div class="t" style="left:479.70px;top:470.70px;font-size:36.5px;line-height:36.5px;color:#030712;font-weight:700;transform:scaleX(1.0225);transform-origin:0.00px 0">4.5%</div>
<div class="t" style="left:479.70px;top:514.76px;font-size:18px;line-height:18px;color:#6b7280;-webkit-text-stroke:0.2px #6b7280;letter-spacing:0.311px">Students placed this year</div>
<div class="t" style="left:996.10px;top:427.68px;font-size:21.4px;line-height:21.4px;color:#111827;-webkit-text-stroke:0.45px #111827;letter-spacing:-0.426px">Active Companies</div>
<div class="t" style="left:995.10px;top:470.70px;font-size:36.5px;line-height:36.5px;color:#030712;font-weight:700;transform:scaleX(1.1332);transform-origin:-1.00px 0">53</div>
<div class="t" style="left:996.10px;top:514.76px;font-size:18px;line-height:18px;color:#6b7280;-webkit-text-stroke:0.2px #6b7280;letter-spacing:0.344px">Companies recruiting</div>
<div class="t" style="left:1512.50px;top:427.68px;font-size:21.4px;line-height:21.4px;color:#111827;-webkit-text-stroke:0.45px #111827;letter-spacing:-0.288px">Active Jobs</div>
<div class="t" style="left:1512.50px;top:470.70px;font-size:36.5px;line-height:36.5px;color:#030712;font-weight:700;transform:scaleX(1.1292);transform-origin:0.00px 0">443</div>
<div class="t" style="left:1512.50px;top:514.76px;font-size:18px;line-height:18px;color:#6b7280;-webkit-text-stroke:0.2px #6b7280;letter-spacing:0.258px">Total positions available</div>
<div class="t" style="left:2029.00px;top:427.68px;font-size:21.4px;line-height:21.4px;color:#111827;-webkit-text-stroke:0.45px #111827;transform:scaleX(0.9369);transform-origin:0.00px 0">Average Package</div>
<div class="t" style="left:2052.00px;top:470.70px;font-size:36.5px;line-height:36.5px;color:#030712;font-weight:700;transform:scaleX(1.0232);transform-origin:0.00px 0">46.8L</div>
<div class="t" style="left:2028.00px;top:514.76px;font-size:18px;line-height:18px;color:#6b7280;-webkit-text-stroke:0.2px #6b7280;letter-spacing:0.171px">Per annum across all streams</div>
<div class="t" style="left:477.80px;top:643.98px;font-size:24.6px;line-height:24.6px;color:#030712;-webkit-text-stroke:0.85px #030712;letter-spacing:-0.385px">Placement Status by Program</div>
<div class="t" style="left:1511.20px;top:643.98px;font-size:24.6px;line-height:24.6px;color:#030712;-webkit-text-stroke:0.85px #030712;letter-spacing:-0.398px">CTC Distribution by Program</div>
<div class="t" style="left:879.80px;top:812.84px;font-size:25px;line-height:25px;color:#1f2937;-webkit-text-stroke:0.85px #1f2937;letter-spacing:0.401px">MBA Marketing 2024-2026</div>
<div class="t" style="left:910.50px;top:858.15px;font-size:21.2px;line-height:21.2px;color:#111827;-webkit-text-stroke:0.2px #111827;letter-spacing:0.140px">Placed: 0 students</div>
<div class="t" style="left:910.50px;top:893.45px;font-size:21.2px;line-height:21.2px;color:#111827;-webkit-text-stroke:0.2px #111827;letter-spacing:0.183px">Unplaced: 22 students</div>
<div class="t" style="left:882.30px;top:936.39px;font-size:20.8px;line-height:20.8px;color:#374151;-webkit-text-stroke:0.2px #374151;letter-spacing:0.593px">Total: 22 students</div>
<div class="t" style="left:881.30px;top:971.48px;font-size:21.4px;line-height:21.4px;color:#1e9ef2;-webkit-text-stroke:0.85px #1e9ef2;letter-spacing:0.561px">Placement Rate: 0%</div>
<div class="t" style="left:521.30px;top:1284.44px;font-size:25px;line-height:25px;color:#030712;-webkit-text-stroke:0.85px #030712;transform:scaleX(0.9471);transform-origin:0.00px 0">Top 5 Active Jobs</div>
<div class="t" style="left:478.60px;top:1324.39px;font-size:20.8px;line-height:20.8px;color:#6b7280;-webkit-text-stroke:0.2px #6b7280;letter-spacing:0.292px">Most popular job opportunities with student participation counts for B Tech, MBA, BBA, BCA</div>
<div class="t" style="left:491.60px;top:1406.58px;font-size:21.4px;line-height:21.4px;color:#6b7280;-webkit-text-stroke:0.45px #6b7280;letter-spacing:-0.647px">Rank</div>
<div class="t" style="left:566.30px;top:1406.58px;font-size:21.4px;line-height:21.4px;color:#6b7280;-webkit-text-stroke:0.45px #6b7280;letter-spacing:0.444px">Job Title</div>
<div class="t" style="left:1870.50px;top:1407.08px;font-size:21.4px;line-height:21.4px;color:#6b7280;-webkit-text-stroke:0.45px #6b7280;letter-spacing:0.300px">Positions</div>
<div class="t" style="left:2046.30px;top:1392.08px;font-size:21.4px;line-height:21.4px;color:#6b7280;-webkit-text-stroke:0.45px #6b7280;letter-spacing:-0.247px">Salary</div>
<div class="t" style="left:2044.50px;top:1420.68px;font-size:21.4px;line-height:21.4px;color:#6b7280;-webkit-text-stroke:0.45px #6b7280;letter-spacing:-0.159px">Range</div>
<div class="t" style="left:2152.40px;top:1392.08px;font-size:21.4px;line-height:21.4px;color:#6b7280;-webkit-text-stroke:0.45px #6b7280;letter-spacing:0.485px">Application</div>
<div class="t" style="left:2163.70px;top:1420.68px;font-size:21.4px;line-height:21.4px;color:#6b7280;-webkit-text-stroke:0.45px #6b7280;letter-spacing:0.209px">Deadline</div>
<div class="t" style="left:2305.80px;top:1407.08px;font-size:21.4px;line-height:21.4px;color:#6b7280;-webkit-text-stroke:0.45px #6b7280;letter-spacing:0.458px">Participants</div>
<div class="t" style="left:507.50px;top:1483.06px;font-size:16px;line-height:16px;color:#854d0e;-webkit-text-stroke:0.85px #854d0e;transform:scaleX(0.9375);transform-origin:-1.00px 0">1</div>
<div class="t" style="left:565.30px;top:1468.72px;font-size:21px;line-height:21px;color:#111827;-webkit-text-stroke:0.85px #111827;letter-spacing:0.740px">hjkhkkh jhk jk</div>
<div class="t" style="left:566.30px;top:1497.16px;font-size:18px;line-height:18px;color:#6b7280;-webkit-text-stroke:0.2px #6b7280;letter-spacing:0.290px">Adobe</div>
<div class="t" style="left:1947.30px;top:1479.88px;font-size:21.4px;line-height:21.4px;color:#111827;-webkit-text-stroke:0.85px #111827;transform:scaleX(0.9583);transform-origin:0.00px 0">0</div>
<div class="t" style="left:2006.50px;top:1465.35px;font-size:21.8px;line-height:21.8px;color:#15803d;-webkit-text-stroke:0.45px #15803d;letter-spacing:-0.245px">Salary Not</div>
<div class="t" style="left:2011.20px;top:1493.95px;font-size:21.8px;line-height:21.8px;color:#15803d;-webkit-text-stroke:0.45px #15803d;letter-spacing:0.179px">Disclosed</div>
<div class="t" style="left:2179.00px;top:1470.76px;font-size:18.6px;line-height:18.6px;color:#6b7280;-webkit-text-stroke:0.2px #6b7280;letter-spacing:-0.257px">14 Jan</div>
<div class="t" style="left:2185.20px;top:1493.96px;font-size:18.6px;line-height:18.6px;color:#6b7280;-webkit-text-stroke:0.2px #6b7280;letter-spacing:0.392px">2026</div>
<div class="t" style="left:2395.20px;top:1481.66px;font-size:18.6px;line-height:18.6px;color:#111827;-webkit-text-stroke:0.85px #111827">0</div>
<div class="t" style="left:553.02px;top:707.24px;font-size:18.5px;line-height:18.5px;color:#666666;-webkit-text-stroke:0.2px #666666">120</div>
<div class="t" style="left:563.31px;top:807.54px;font-size:18.5px;line-height:18.5px;color:#666666;-webkit-text-stroke:0.2px #666666">90</div>
<div class="t" style="left:563.31px;top:913.94px;font-size:18.5px;line-height:18.5px;color:#666666;-webkit-text-stroke:0.2px #666666">60</div>
<div class="t" style="left:563.31px;top:1020.34px;font-size:18.5px;line-height:18.5px;color:#666666;-webkit-text-stroke:0.2px #666666">30</div>
<div class="t" style="left:573.60px;top:1127.04px;font-size:18.5px;line-height:18.5px;color:#666666;-webkit-text-stroke:0.2px #666666">0</div>
<div class="t" style="left:1586.12px;top:706.94px;font-size:18.5px;line-height:18.5px;color:#666666;-webkit-text-stroke:0.2px #666666">600</div>
<div class="t" style="left:1586.12px;top:807.54px;font-size:18.5px;line-height:18.5px;color:#666666;-webkit-text-stroke:0.2px #666666">450</div>
<div class="t" style="left:1586.12px;top:913.94px;font-size:18.5px;line-height:18.5px;color:#666666;-webkit-text-stroke:0.2px #666666">300</div>
<div class="t" style="left:1586.12px;top:1020.34px;font-size:18.5px;line-height:18.5px;color:#666666;-webkit-text-stroke:0.2px #666666">150</div>
<div class="t" style="left:1606.70px;top:1127.04px;font-size:18.5px;line-height:18.5px;color:#666666;-webkit-text-stroke:0.2px #666666">0</div>
</div></div>
</body></html>
